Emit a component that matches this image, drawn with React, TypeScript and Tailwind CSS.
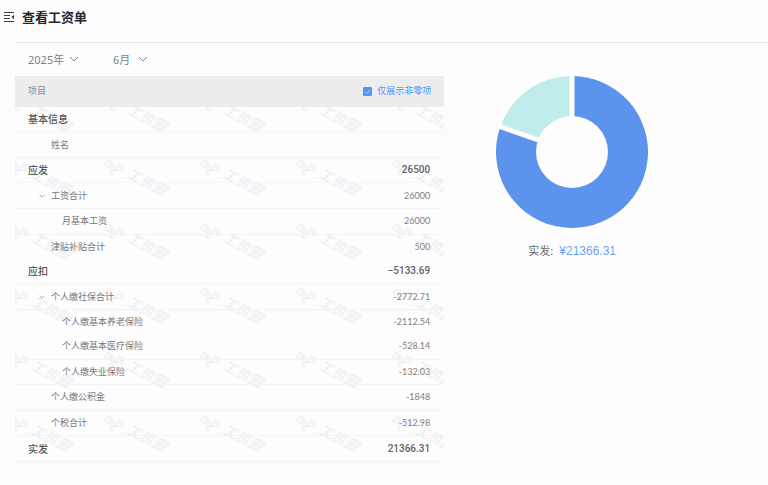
import { useId, useState } from "react";

type Row = {
  name: string;
  value?: string;
  level: 0 | 1 | 2;
  open?: boolean;
  plain?: boolean;
};

const rows: Row[] = [
  { name: "基本信息", level: 0 },
  { name: "姓名", level: 1 },
  { name: "应发", value: "26500", level: 0 },
  { name: "工资合计", value: "26000", level: 1, open: true },
  { name: "月基本工资", value: "26000", level: 2 },
  { name: "津贴补贴合计", value: "500", level: 1, plain: true },
  { name: "应扣", value: "−5133.69", level: 0 },
  { name: "个人缴社保合计", value: "-2772.71", level: 1, open: true },
  { name: "个人缴基本养老保险", value: "-2112.54", level: 2, plain: true },
  { name: "个人缴基本医疗保险", value: "-528.14", level: 2 },
  { name: "个人缴失业保险", value: "-132.03", level: 2 },
  { name: "个人缴公积金", value: "-1848", level: 1 },
  { name: "个税合计", value: "-512.98", level: 1 },
  { name: "实发", value: "21366.31", level: 0 },
];

const indent = { 0: "pl-[13px]", 1: "pl-[36px]", 2: "pl-[47px]" };

function Chevron({ className }: { className: string }) {
  return (
    <svg viewBox="0 0 10 6" className={className} fill="none" stroke="currentColor" aria-hidden="true">
      <path d="M1 1l4 4 4-4" />
    </svg>
  );
}

function MenuIcon() {
  return (
    <svg viewBox="0 0 12 12" className="h-3 w-3" fill="none" stroke="#3a3d44" strokeWidth="1.2" aria-hidden="true">
      <path d="M1 1.500h10M1 4.500h6M1 7.500h6M1 10.500h10" />
      <path d="M11 3.800v4.400L8.300 6z" fill="#3a3d44" stroke="none" />
    </svg>
  );
}

function Watermark() {
  const id = useId();
  return (
    <svg className="pointer-events-none absolute inset-0 h-full w-full" aria-hidden="true">
      <defs>
        <pattern id={id} width="96" height="64" patternUnits="userSpaceOnUse" x="82" y="43">
          <g transform="translate(8 13) rotate(24)" fill="none" stroke="#f1f2f5" strokeWidth="2">
            <path d="M7.500 -3.500H2L0.500 2H6.500L7.500 -1H4M19 -4.500H13.500L12 1H18L19 -2H15.500M14 3L10 2.500L8.500 7H13M10 2.500L6.500 2M12 1L9 -1" />
          </g>
          <text
            transform="translate(29 27) rotate(27)"
            fontSize="14"
            fontWeight="900"
            fontStyle="italic"
            fill="#f1f2f5"
          >
            工资圈
          </text>
        </pattern>
      </defs>
      <rect width="100%" height="100%" fill={`url(#${id})`} />
    </svg>
  );
}

function Picker({ label, value, options, width }: { label: string; value: string; options: string[]; width: string }) {
  const [current, setCurrent] = useState(value);
  return (
    <div className={`${width} grid items-center`}>
      <select
        aria-label={label}
        value={current}
        onChange={(e) => setCurrent(e.target.value)}
        className="col-start-1 row-start-1 h-6 w-full appearance-none bg-transparent text-[11px] leading-5 text-[#7c7f84] outline-none"
      >
        {options.map((o) => (
          <option key={o}>{o}</option>
        ))}
      </select>
      <Chevron className="pointer-events-none col-start-1 row-start-1 mb-[2px] h-[6px] w-[10px] justify-self-end text-[#85888d]" />
    </div>
  );
}

function PayTable() {
  const [nonZero, setNonZero] = useState(true);
  return (
    <section className="min-w-0 flex-1">
      <div className="flex h-[31px] items-center justify-between bg-[#ededed] pr-[13px] pb-px pl-[13px] text-[9px] text-[#85888d]">
        <span>项目</span>
        <label className="flex items-center gap-[5px] text-[#4f92f7]">
          <span className="grid h-[9px] w-[9px]">
            <input
              type="checkbox"
              checked={nonZero}
              onChange={(e) => setNonZero(e.target.checked)}
              className="col-start-1 row-start-1 h-[9px] w-[9px] appearance-none rounded-[1px] border border-[#5594f5] checked:bg-[#5594f5]"
            />
            <svg viewBox="0 0 9 9" className="pointer-events-none col-start-1 row-start-1" fill="none" stroke="#b9d3fc" strokeWidth="0.800" aria-hidden="true">
              <path d="M2 4.500L4 6.500L7 3" />
            </svg>
          </span>
          仅展示非零项
        </label>
      </div>
      <div className="relative">
        <Watermark />
        <table className="relative h-[355px] w-full border-collapse text-[9px] leading-4 text-[#77797e]">
          <tbody>
            {rows.map((row) => (
              <tr key={row.name} className={row.plain ? "" : "border-b border-[#f1f4f8]"}>
                <th
                  scope="row"
                  className={`${indent[row.level]} text-left ${
                    row.level === 0 ? "text-[10px] font-medium text-[#54565b]" : "font-normal"
                  }`}
                >
                  {row.open ? (
                    <button type="button" className="-ml-3 flex items-center gap-[6px]">
                      <Chevron className="h-1 w-[6px] text-[#6f7277]" />
                      {row.name}
                    </button>
                  ) : (
                    row.name
                  )}
                </th>
                <td
                  className={`pr-[14px] text-right ${
                    row.level === 0
                      ? "font-['Roboto',sans-serif] text-[10px] font-medium text-[#606267]"
                      : "font-['Lato',sans-serif] text-[#808286]"
                  }`}
                >
                  {row.value}
                </td>
              </tr>
            ))}
          </tbody>
        </table>
      </div>
    </section>
  );
}

function Donut() {
  return (
    <svg viewBox="0 1 154 153" className="w-[154px]" role="img" aria-label="实发占比">
      <path d="M77 77V1A76 76 0 1 1 5.300 51.800z" fill="#5c93ed" />
      <path d="M77 77V1A76 76 0 0 0 5.300 51.800z" fill="#c0edec" />
      <circle cx="77" cy="77" r="36" fill="#fdfdfd" />
      <path d="M77 77V0M77 77L2.500 50.600" stroke="#fdfdfd" strokeWidth="5" />
    </svg>
  );
}

export default function App() {
  return (
    <main className="min-h-screen bg-[#fdfdfd] pb-6 font-['Noto_Sans','Noto_Sans_CJK_SC',sans-serif]">
      <header className="flex h-[42px] items-start gap-[7px] pt-[7px] pl-[3px]">
        <button type="button" aria-label="收起菜单" className="flex h-5 items-center">
          <MenuIcon />
        </button>
        <h1 className="text-[13px] leading-5 font-bold text-[#24262c]">查看工资单</h1>
      </header>
      <div className="ml-[15px] border-t border-[#e6e6e7]">
        <div className="flex h-[33px] items-center gap-[34px] pt-px pl-[13px]">
          <Picker label="年份" value="2025年" options={["2024年", "2025年"]} width="w-[51px]" />
          <Picker label="月份" value="6月" options={["5月", "6月", "7月"]} width="w-[35px]" />
        </div>
        <div className="flex">
          <div className="flex w-[57%] shrink-0">
            <PayTable />
          </div>
          <aside className="flex w-[34%] flex-col items-center">
            <Donut />
            <p className="mt-3 flex gap-[6px] text-[11px] leading-5 text-[#66686d]">
              <span>实发:</span>
              <span className="font-['Liberation_Sans'] text-xs leading-5 text-[#6ea2f2]">¥21366.31</span>
            </p>
          </aside>
        </div>
      </div>
    </main>
  );
}
